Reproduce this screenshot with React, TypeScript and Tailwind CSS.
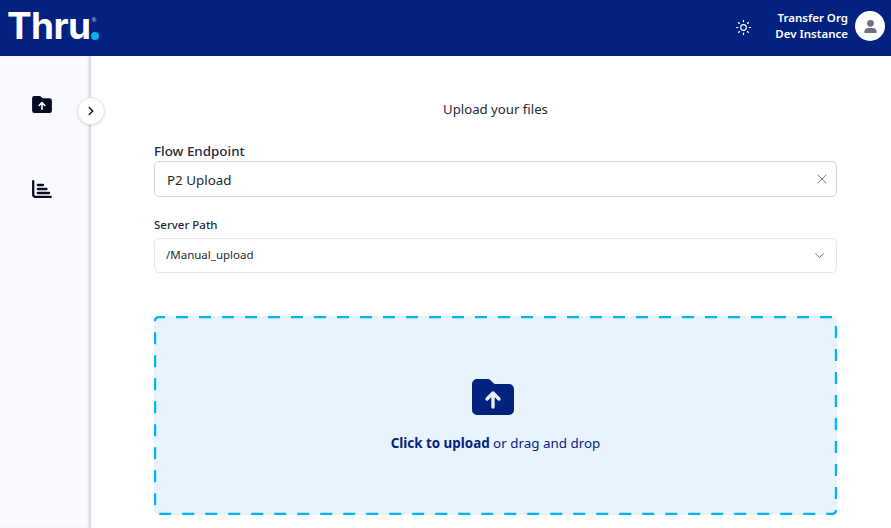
import { ChevronDown, ChevronRight, Sun, X } from 'lucide-react'

function FolderUpload({ className, arrow }: { className?: string; arrow: string }) {
  return (
    <svg viewBox="0 0 42 36" className={className}>
      <path fill="currentColor" d="M5 0h10.500c1.200 0 2.200.5 3 1.300L22.500 5H37a5 5 0 0 1 5 5v21a5 5 0 0 1-5 5H5a5 5 0 0 1-5-5V5a5 5 0 0 1 5-5z" />
      <path fill="none" stroke={arrow} strokeWidth="3.400" strokeLinecap="round" strokeLinejoin="round" d="M21 28V14M15 20l6-6 6 6" />
    </svg>
  )
}

function ChartIcon() {
  return (
    <svg viewBox="0 0 20 18" className="h-[18px] w-5 text-[#070b24]">
      <path fill="none" stroke="currentColor" strokeWidth="2.300" strokeLinecap="round" d="M1.200 1.200v13.300A2.300 2.300 0 0 0 3.500 16.800H18.800M5.800 5H11M5.800 9H14.500M5.800 13H17" />
    </svg>
  )
}

function UserIcon() {
  return (
    <svg viewBox="0 0 16 16" className="h-[15px] w-[15px] text-[#6b7280]">
      <circle cx="8" cy="4.600" r="3.600" fill="currentColor" />
      <path fill="currentColor" d="M1.500 15v-1.800C1.500 11 3.500 9.600 5.500 9.600h5c2 0 4 1.400 4 3.600V15z" />
    </svg>
  )
}

export default function App() {
  return (
    <div className="flex h-[528px] w-[891px] flex-col overflow-hidden bg-white font-['Noto_Sans','Open_Sans',sans-serif] text-[#111827]">
      <header className="flex h-14 shrink-0 items-center justify-between bg-[#03227f] pb-[4px] pl-[7px] pr-[6px]">
        <div className="-mt-[1px] flex items-start text-white">
          <span className="font-['Inter',sans-serif] text-[37px] font-bold leading-none tracking-[-0.6px]">Thru</span>
          <div className="ml-[1px] flex w-2 flex-col">
            <span className="mt-[10px] h-[6px] text-[6px] leading-[6px] text-[#b9c4e4]">®</span>
            <span className="mt-[9px] h-2 w-2 rounded-full bg-[#00b5f1]" />
          </div>
        </div>
        <div className="flex items-center">
          <Sun className="mr-[23px] mt-[2px] h-[17px] w-[17px] text-white" strokeWidth={1.6} />
          <div className="mr-[7px] text-right text-[11.500px] font-semibold leading-[16px] text-white">
            <div>Transfer Org</div>
            <div>Dev Instance</div>
          </div>
          <div className="flex h-[30px] w-[30px] items-center justify-center rounded-full bg-white">
            <UserIcon />
          </div>
        </div>
      </header>

      <div className="flex min-h-0 flex-1">
        <aside className="relative flex w-[91px] shrink-0 flex-col items-center bg-[#f9fafe] pt-[40px] pr-[7px] shadow-[inset_-3px_0_3px_-1px_rgba(0,0,0,0.16)]">
          <FolderUpload className="h-[17px] w-5 text-[#070b24]" arrow="#ffffff" />
          <div className="mt-[67px] flex">
            <ChartIcon />
          </div>
          <button className="absolute left-[77px] top-[41px] flex h-7 w-7 items-center justify-center rounded-full border border-[#e5e7eb] bg-white shadow-[0_1px_2px_rgba(0,0,0,0.12)]">
            <ChevronRight className="h-[14px] w-[14px] text-[#111827]" strokeWidth={2.500} />
          </button>
        </aside>

        <main className="min-w-0 flex-1 pl-[63px] pr-[54px] pt-[43px]">
          <p className="text-center text-[13.200px] leading-[20px] text-[#1f2937]">Upload your files</p>

          <label className="mt-[22px] block text-[13.400px] font-medium leading-[20px] text-[#1f2937]">Flow Endpoint</label>
          <div className="flex h-9 items-center justify-between rounded-[5px] border border-[#d1d5db] pl-3 pr-[6px] text-[13.400px] text-[#1f2937]">
            <span className="mt-[2px]">P2 Upload</span>
            <X className="h-4 w-4 text-[#6b7280]" strokeWidth={1.4} />
          </div>

          <label className="mt-[19px] block text-[11.500px] font-medium leading-[18px] text-[#1f2937]">Server Path</label>
          <div className="mt-1 flex h-[35px] items-center justify-between rounded-[5px] border border-[#e5e7eb] pl-[11px] pr-[9px] text-[11.500px] text-[#1f2937]">
            <span className="mb-[2px]">/Manual_upload</span>
            <ChevronDown className="h-[15px] w-[15px] text-[#6b7280]" strokeWidth={1.6} />
          </div>

          <div className="relative mt-[43px] flex h-[199px] flex-col items-center rounded-[5px] bg-[#e8f3fc] pt-[63px]">
            <svg className="absolute inset-0 h-full w-full" fill="none">
              <rect x="1" y="1" width="681" height="197" rx="4" stroke="#00b5f1" strokeWidth="2.400" strokeDasharray="12 11" strokeDashoffset="6" />
            </svg>
            <FolderUpload className="mr-[5px] h-9 w-[42px] text-[#03227f]" arrow="#e8f3fc" />
            <p className="mt-[18px] text-[13.400px] leading-[20px] text-[#03227f]">
              <span className="font-bold">Click to upload</span> or drag and drop
            </p>
          </div>
        </main>
      </div>
    </div>
  )
}
